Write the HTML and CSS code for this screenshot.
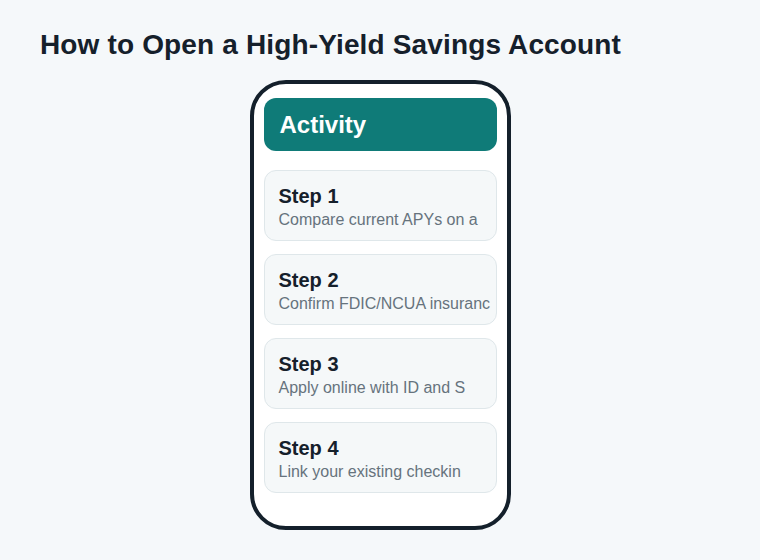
FILE: index.html
```html
<!DOCTYPE html>
<html lang="en">
<head>
    <meta charset="UTF-8">
    <meta name="viewport" content="width=device-width, initial-scale=1.0">
    <title>How to Open a High-Yield Savings Account</title>
    <link rel="stylesheet" href="styles.css">
</head>
<body>

<div class="page">
    <h1>How to Open a High-Yield Savings Account</h1>

    <div class="phone">
        <div class="app-header">Activity</div>

        <div class="step-list">
            <div class="step">
                <div class="step-title">Step 1</div>
                <div class="step-text">Compare current APYs on a </div>
            </div>
            <div class="step">
                <div class="step-title">Step 2</div>
                <div class="step-text">Confirm FDIC/NCUA insuranc</div>
            </div>
            <div class="step">
                <div class="step-title">Step 3</div>
                <div class="step-text">Apply online with ID and S</div>
            </div>
            <div class="step">
                <div class="step-title">Step 4</div>
                <div class="step-text">Link your existing checkin</div>
            </div>
        </div>
    </div>
</div>

</body>
</html>
```

FILE: styles.css
```css
body {
    margin: 0;
    padding: 0;
    background: #f5f8fa;
    font-family: "Liberation Sans", Arial, sans-serif;
    color: #15202b;
}

.page {
    padding: 28px 40px;
}

h1 {
    margin: 0 0 18px;
    font-size: 28px;
    font-weight: bold;
    line-height: 34px;
    letter-spacing: 0.15px;
}

.phone {
    width: 233px;
    height: 414px;
    margin: 0 auto;
    padding: 14px 10px;
    background: #fff;
    border: 4px solid #14202b;
    border-radius: 36px;
}

.app-header {
    height: 53px;
    padding: 0 16px;
    display: flex;
    align-items: center;
    background: #0f7b78;
    border-radius: 12px;
    color: #fff;
    font-size: 24px;
    font-weight: bold;
}

.step-list {
    margin-top: 19px;
    display: flex;
    flex-direction: column;
    gap: 13px;
}

.step {
    padding: 14px 14px 11px;
    background: #f5f8f9;
    border: 1px solid #dfe7ea;
    border-radius: 12px;
    white-space: nowrap;
    overflow: hidden;
}

.step-title {
    font-size: 20px;
    font-weight: bold;
    line-height: 22px;
}

.step-text {
    margin-top: 3px;
    font-size: 16px;
    line-height: 19px;
    color: #66737d;
}
```
